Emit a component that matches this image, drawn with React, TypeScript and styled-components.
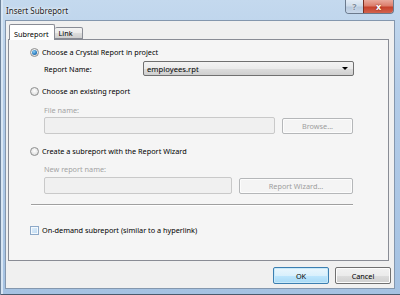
import styled, { createGlobalStyle } from "styled-components";

const GlobalStyle = createGlobalStyle`
  html, body { margin: 0; padding: 0; background: #5d6f84; }
  body {
    font-family: "Noto Sans", "Liberation Sans", sans-serif;
    font-size: 7.3px;
    color: #000;
  }
  * { box-sizing: border-box; }
`;

const Window = styled.div`
  width: 400px;
  height: 295px;
  display: flex;
  flex-direction: column;
  padding: 0 5px 6px 4px;
  border-left: 1px solid #6f849c;
  background: linear-gradient(to bottom, #c4d9ee 0%, #b3cce8 30%, #a5c2e2 100%);
  box-shadow: inset 0 -1px 0 #4a5a6d, inset 2px 0 0 #d8e6f4;
`;

const TitleBar = styled.div`
  height: 20px;
  display: flex;
  justify-content: space-between;
  align-items: flex-start;
`;

const Title = styled.div`
  padding: 5px 0 0 1px;
  font-size: 8px;
  color: #1e1e1e;
  text-shadow: 0 0 4px #fff, 0 0 2px #fff;
`;

const CaptionGroup = styled.div`
  display: flex;
  margin-right: 1px;
  border: 1px solid #6b7a8d;
  border-top: none;
  border-radius: 0 0 4px 4px;
  overflow: hidden;
  height: 14px;
`;

const CaptionButton = styled.div<{ $close?: boolean }>`
  width: ${(p) => (p.$close ? "30px" : "17px")};
  display: flex;
  align-items: center;
  justify-content: center;
  font-size: 9px;
  font-weight: bold;
  color: ${(p) => (p.$close ? "#fff" : "#7c8a9a")};
  border-left: ${(p) => (p.$close ? "1px solid #7a2f22" : "none")};
  background: ${(p) =>
    p.$close
      ? "linear-gradient(to bottom, #e9a99c 0%, #dc7e6c 45%, #c6422c 55%, #d2634e 100%)"
      : "linear-gradient(to bottom, #e3ecf6 0%, #cfdcea 45%, #b8c9dd 55%, #c9d8ea 100%)"};
  text-shadow: ${(p) => (p.$close ? "0 0 2px #7a2010" : "0 0 2px #fff")};
`;

const Client = styled.div`
  flex: 1;
  display: flex;
  flex-direction: column;
  background: #f0f0f0;
  border: 1px solid #8497ae;
  padding: 3px 4px 0 2px;
`;

const TabRow = styled.div`
  display: flex;
  align-items: flex-end;
  height: 15px;
  padding-left: 1px;
  position: relative;
  z-index: 1;
`;

const Tab = styled.div<{ $active?: boolean }>`
  height: ${(p) => (p.$active ? "16px" : "12px")};
  margin-bottom: ${(p) => (p.$active ? "-1px" : "0")};
  padding: ${(p) => (p.$active ? "2px 5px 0 4px" : "0 9px 0 4px")};
  display: flex;
  align-items: center;
  border: 1px solid #898c95;
  border-bottom: ${(p) => (p.$active ? "none" : "1px solid #898c95")};
  border-left: ${(p) => (p.$active ? "1px solid #898c95" : "none")};
  border-radius: 2px 2px 0 0;
  background: ${(p) =>
    p.$active ? "#ffffff" : "linear-gradient(to bottom, #f3f3f3 0%, #ebebeb 50%, #dddddd 51%, #cfcfcf 100%)"};
  color: #000;
`;

const Panel = styled.div`
  width: 381px;
  height: 222px;
  border: 1px solid #898c95;
  background: #f5f5f5;
  display: flex;
  flex-direction: column;
  padding: 6px 0 0 21px;
`;

const Row = styled.div<{ $mt?: number; $indent?: boolean; $h?: number }>`
  display: flex;
  align-items: center;
  margin-top: ${(p) => p.$mt ?? 0}px;
  margin-left: ${(p) => (p.$indent ? "14px" : "0")};
  height: ${(p) => p.$h ?? 12}px;
`;

const Radio = styled.span<{ $checked?: boolean }>`
  width: 9px;
  height: 9px;
  border-radius: 50%;
  border: 1px solid #8e8f8f;
  background: radial-gradient(circle at 50% 40%, #ffffff 0%, #e6e6e6 60%, #cdcdcd 100%);
  display: flex;
  align-items: center;
  justify-content: center;
  margin-right: 3px;
  flex-shrink: 0;
  &::after {
    content: "";
    display: ${(p) => (p.$checked ? "block" : "none")};
    width: 5px;
    height: 5px;
    border-radius: 50%;
    background: radial-gradient(circle at 40% 35%, #8fd0f5 0%, #2c7fc2 55%, #1a4f8c 100%);
  }
`;

const Check = styled.span`
  width: 9px;
  height: 9px;
  border: 1px solid #8ea9c8;
  background: linear-gradient(135deg, #e3f0fb 0%, #bcd9f2 100%);
  box-shadow: inset 0 0 0 1px #f4f9fd;
  margin-right: 3px;
  flex-shrink: 0;
`;

const Label = styled.span<{ $disabled?: boolean; $w?: number }>`
  color: ${(p) => (p.$disabled ? "#a3a3a3" : "#000")};
  width: ${(p) => (p.$w ? `${p.$w}px` : "auto")};
  white-space: nowrap;
`;

const Combo = styled.div`
  width: 211px;
  height: 15px;
  border: 1px solid #707070;
  border-radius: 2px;
  background: linear-gradient(to bottom, #f3f3f3 0%, #ebebeb 50%, #dddddd 51%, #cfcfcf 100%);
  display: flex;
  align-items: center;
  justify-content: space-between;
  padding: 0 5px 0 3px;
  font-size: 7.7px;
`;

const Arrow = styled.span`
  width: 0;
  height: 0;
  border-left: 3px solid transparent;
  border-right: 3px solid transparent;
  border-top: 3px solid #000;
`;

const TextBox = styled.div<{ $w: number }>`
  width: ${(p) => p.$w}px;
  height: 17px;
  border: 1px solid #c9c9c9;
  border-radius: 2px;
  background: #f0f0f0;
`;

const Button = styled.div<{ $w: number; $disabled?: boolean; $primary?: boolean }>`
  width: ${(p) => p.$w}px;
  height: ${(p) => (p.$primary !== undefined ? 17 : 16)}px;
  border: 1px solid ${(p) => (p.$disabled ? "#b5b7b9" : p.$primary ? "#3c7fb1" : "#707070")};
  border-radius: 2px;
  display: flex;
  align-items: center;
  justify-content: center;
  color: ${(p) => (p.$disabled ? "#9d9d9d" : "#000")};
  background: ${(p) =>
    p.$disabled
      ? "#f4f4f4"
      : p.$primary
      ? "linear-gradient(to bottom, #eaf6fd 0%, #d9f0fc 50%, #bee6fd 51%, #a7d9f5 100%)"
      : "linear-gradient(to bottom, #f2f2f2 0%, #ebebeb 50%, #dddddd 51%, #cfcfcf 100%)"};
  box-shadow: ${(p) => (p.$primary ? "inset 0 0 0 1px #c8e9f9" : "inset 0 0 0 1px #fcfcfc")};
`;

const Gap = styled.span<{ $w: number }>`
  width: ${(p) => p.$w}px;
  flex-shrink: 0;
`;

const Separator = styled.div`
  width: 322px;
  height: 1px;
  margin-top: 10px;
  margin-left: 1px;
  background: #a0a0a0;
  box-shadow: 0 1px 0 #fff;
`;

const Footer = styled.div`
  display: flex;
  justify-content: flex-end;
  gap: 6px;
  margin-top: 6px;
  margin-right: -1px;
`;

export default function App() {
  return (
    <>
      <GlobalStyle />
      <Window>
        <TitleBar>
          <Title>Insert Subreport</Title>
          <CaptionGroup>
            <CaptionButton>?</CaptionButton>
            <CaptionButton $close>x</CaptionButton>
          </CaptionGroup>
        </TitleBar>
        <Client>
          <TabRow>
            <Tab $active>Subreport</Tab>
            <Tab>Link</Tab>
          </TabRow>
          <Panel>
            <Row>
              <Radio $checked />
              <Label>Choose a Crystal Report in project</Label>
            </Row>
            <Row $mt={3} $indent $h={15}>
              <Label $w={99}>Report Name:</Label>
              <Combo>
                <span>employees.rpt</span>
                <Arrow />
              </Combo>
            </Row>
            <Row $mt={9}>
              <Radio />
              <Label>Choose an existing report</Label>
            </Row>
            <Row $mt={7} $indent>
              <Label $disabled>File name:</Label>
            </Row>
            <Row $mt={1} $indent $h={17}>
              <TextBox $w={231} />
              <Gap $w={7} />
              <Button $w={71} $disabled>Browse...</Button>
            </Row>
            <Row $mt={11}>
              <Radio />
              <Label>Create a subreport with the Report Wizard</Label>
            </Row>
            <Row $mt={6} $indent>
              <Label $disabled>New report name:</Label>
            </Row>
            <Row $mt={2} $indent $h={17}>
              <TextBox $w={188} />
              <Gap $w={7} />
              <Button $w={114} $disabled>Report Wizard...</Button>
            </Row>
            <Separator />
            <Row $mt={19}>
              <Check />
              <Label>On-demand subreport (similar to a hyperlink)</Label>
            </Row>
          </Panel>
          <Footer>
            <Button $w={56} $primary>OK</Button>
            <Button $w={56} $primary={false}>Cancel</Button>
          </Footer>
        </Client>
      </Window>
    </>
  );
}
